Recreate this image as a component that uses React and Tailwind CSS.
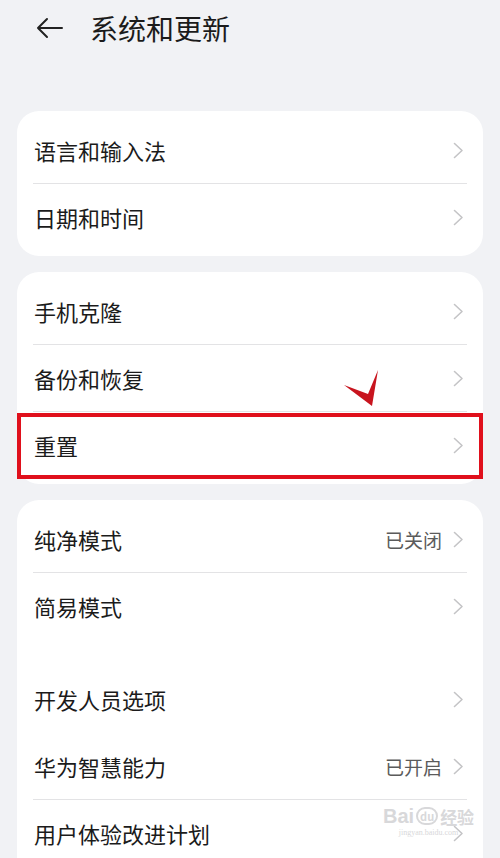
import { Fragment } from "react";

const font = { fontFamily: '"Noto Sans CJK SC", "Noto Sans", sans-serif' };

function Chevron() {
  return (
    <svg width="11" height="17" viewBox="0 0 11 17" fill="none" className="shrink-0">
      <path d="M1.5 1.5 L9 8.5 L1.5 15.5" stroke="#c4c4c6" strokeWidth="1.6" strokeLinecap="round" strokeLinejoin="round" />
    </svg>
  );
}

function Row({ label, value, highlight }) {
  return (
    <div className="relative h-[66px] flex items-center pl-[17px] pr-[19px]">
      <span className="flex-1 text-[22px] leading-none text-[#1b1b1b]">{label}</span>
      {value && <span className="text-[19px] leading-none text-[#5b5b5b] mr-[11px]">{value}</span>}
      <Chevron />
      {highlight && (
        <div className="absolute left-0 right-0 top-[1px] bottom-[-1px] border-[4px] border-[#e0101c]" />
      )}
    </div>
  );
}

function Divider() {
  return <div className="mx-4 h-px bg-[#e3e3e5]" />;
}

function Card({ rows, children }) {
  return (
    <div className="bg-white rounded-[22px] py-[6px]">
      {rows.map((r, i) => (
        <Fragment key={r.label}>
          {i > 0 && <Divider />}
          <Row {...r} />
        </Fragment>
      ))}
      {children}
    </div>
  );
}

export default function App() {
  return (
    <div className="relative w-[500px] h-[858px] overflow-hidden bg-[#f1f2f5]" style={font}>
      {/* header */}
      <div className="h-[56px] flex items-center pl-[36px]">
        <svg width="28" height="22" viewBox="0 0 28 22" fill="none">
          <path d="M26 11 H2 M11 2 L2 11 L11 20" stroke="#222" strokeWidth="2" strokeLinecap="round" strokeLinejoin="round" />
        </svg>
        <span className="ml-[26px] text-[28px] leading-none text-[#1b1b1b]">系统和更新</span>
      </div>

      <div className="px-[17px] pt-[55px] flex flex-col gap-[16px]">
        <Card rows={[{ label: "语言和输入法" }, { label: "日期和时间" }]} />

        <Card rows={[{ label: "手机克隆" }, { label: "备份和恢复" }, { label: "重置", highlight: true }]} />

        <div className="bg-white rounded-t-[22px] pt-[6px]">
          <Row label="纯净模式" value="已关闭" />
          <Divider />
          <Row label="简易模式" />
          <div className="h-[27px]" />
          <Row label="开发人员选项" />
          <div className="h-px" />
          <Row label="华为智慧能力" value="已开启" />
          <Divider />
          <Row label="用户体验改进计划" />
        </div>
      </div>

      {/* red check annotation */}
      <svg className="absolute left-[340px] top-[366px]" width="44" height="44" viewBox="0 0 44 44">
        <polygon points="4,19 28,28 38,4 32,40" fill="#c8141e" />
      </svg>

      {/* watermark */}
      <div className="absolute left-[383px] top-[806px] flex flex-col items-center text-[#d8d8da] pointer-events-none">
        <div className="flex items-center gap-[2px] leading-none">
          <span className="text-[20px] font-bold" style={{ fontFamily: '"Liberation Sans", sans-serif' }}>Bai</span>
          <span className="w-[22px] h-[18px] rounded-full border-2 border-[#d8d8da] text-[11px] font-bold flex items-center justify-center">du</span>
          <span className="text-[17px] font-bold">经验</span>
        </div>
        <span className="text-[8px] leading-none mt-[3px]" style={{ fontFamily: '"Liberation Serif", serif' }}>jingyan.baidu.com</span>
      </div>
    </div>
  );
}
